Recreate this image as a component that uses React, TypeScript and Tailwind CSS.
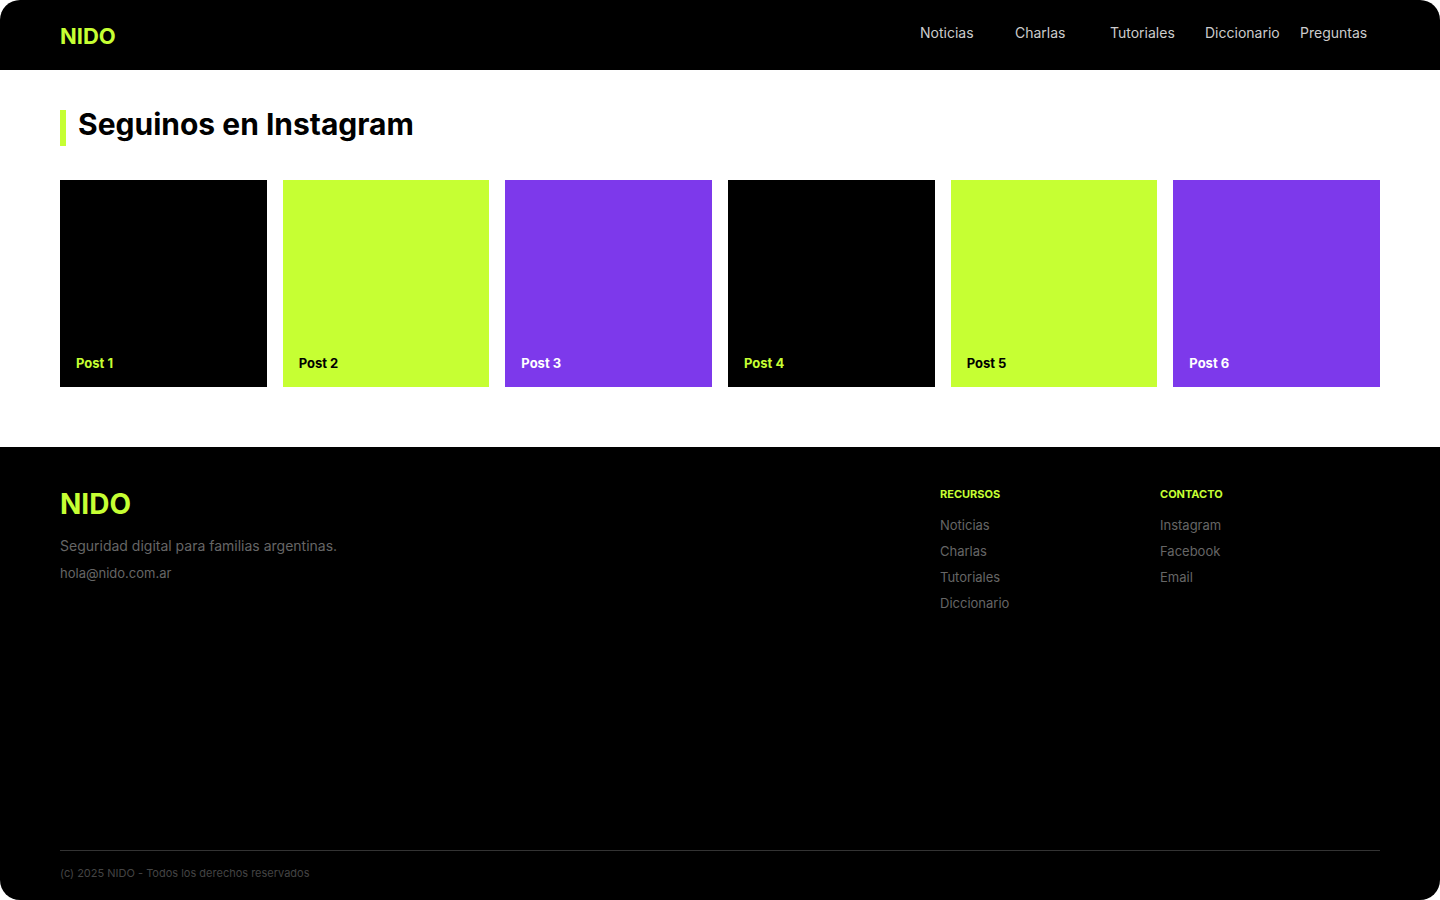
const nav = ["Noticias", "Charlas", "Tutoriales", "Diccionario", "Preguntas"];

const posts = [
  { name: "Post 1", style: "bg-black text-[#c6ff33]" },
  { name: "Post 2", style: "bg-[#c6ff33] text-black" },
  { name: "Post 3", style: "bg-[#7d39eb] text-white" },
  { name: "Post 4", style: "bg-black text-[#c6ff33]" },
  { name: "Post 5", style: "bg-[#c6ff33] text-black" },
  { name: "Post 6", style: "bg-[#7d39eb] text-white" },
];

const columns = [
  { title: "RECURSOS", links: ["Noticias", "Charlas", "Tutoriales", "Diccionario"] },
  { title: "CONTACTO", links: ["Instagram", "Facebook", "Email"] },
];

export default function App() {
  return (
    <div className="flex min-h-screen flex-col overflow-hidden rounded-[20px] bg-white font-['Inter',sans-serif]">
      <header className="flex justify-between bg-black px-15 pt-5 pb-[18px]">
        <a href="#" className="text-[22px] leading-8 font-bold text-[#c6ff33]">NIDO</a>
        <nav className="grid grid-cols-[95px_95px_95px_95px_80px] text-sm leading-[26px] text-[#cccccc]">
          {nav.map((item) => (
            <a key={item} href="#">{item}</a>
          ))}
        </nav>
      </header>

      <main className="px-15 pt-10 pb-15">
        <h1 className="border-l-6 border-[#c6ff33] pb-2 pl-3 text-3xl leading-7 font-bold text-black">
          Seguinos en Instagram
        </h1>
        <div className="mt-[34px] grid grid-cols-6 gap-4">
          {posts.map((post) => (
            <a
              key={post.name}
              href="#"
              className={`flex aspect-square items-end p-4 text-[13px] leading-4 font-bold ${post.style}`}
            >
              {post.name}
            </a>
          ))}
        </div>
      </main>

      <footer className="flex flex-1 flex-col bg-black px-15 pt-10 pb-5 text-[#666666]">
        <div className="flex flex-1 justify-between">
          <div>
            <p className="text-[28px] leading-[34px] font-bold text-[#c6ff33]">NIDO</p>
            <p className="mt-[15px] text-sm leading-5">Seguridad digital para familias argentinas.</p>
            <a href="mailto:hola@nido.com.ar" className="mt-[7px] block text-[13px] leading-5">
              hola@nido.com.ar
            </a>
          </div>
          <div className="grid grid-cols-2">
            {columns.map((column) => (
              <section key={column.title} className="w-[220px]">
                <h2 className="text-[11px] leading-[14px] font-bold text-[#c6ff33]">{column.title}</h2>
                <ul className="mt-[11px] text-[13px] leading-[26px]">
                  {column.links.map((link) => (
                    <li key={link}>
                      <a href="#">{link}</a>
                    </li>
                  ))}
                </ul>
              </section>
            ))}
          </div>
        </div>
        <p className="border-t border-[#333333] pt-[15px] text-[11px] leading-[14px] text-[#444444]">
          (c) 2025 NIDO - Todos los derechos reservados
        </p>
      </footer>
    </div>
  );
}
